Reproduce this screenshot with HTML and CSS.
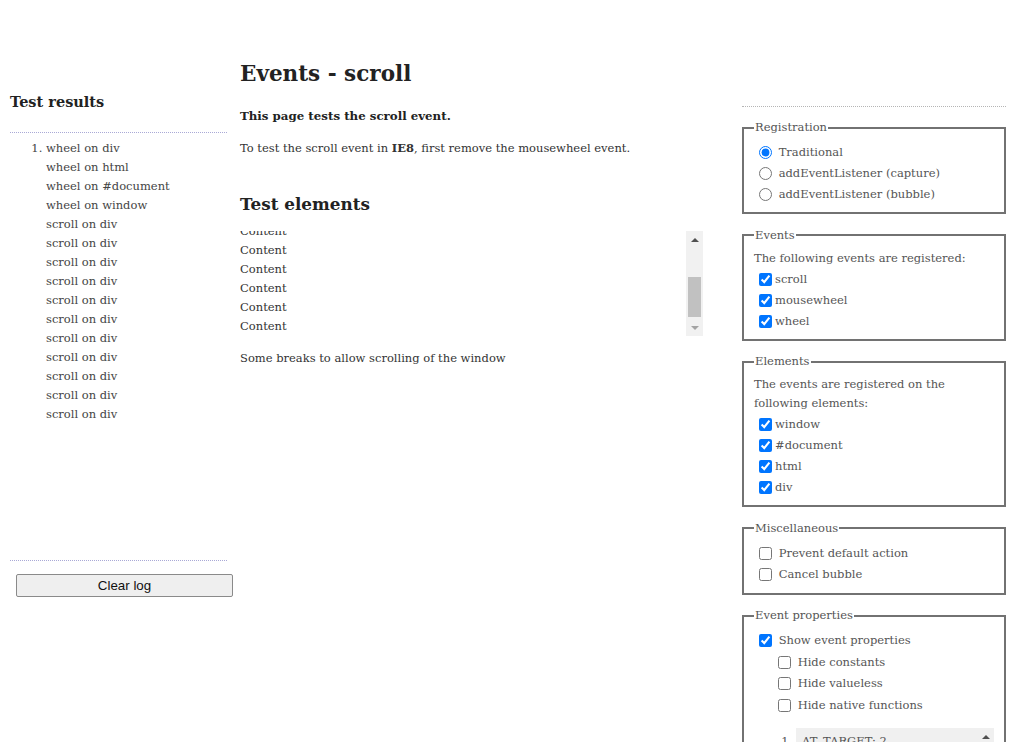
FILE: index.html
```html
<!DOCTYPE html>
<html lang="en">
<head>
    <meta charset="UTF-8">
    <title>Events - scroll</title>
    <link rel="stylesheet" href="styles.css">
</head>
<body>
    <div class="page">
        <div class="sidebar">
            <h3 class="sidebar-title">Test results</h3>
            <div class="log">
                <ol class="log-list">
                    <li>wheel on div<br>wheel on html<br>wheel on #document<br>wheel on window<br>scroll on div<br>scroll on div<br>scroll on div<br>scroll on div<br>scroll on div<br>scroll on div<br>scroll on div<br>scroll on div<br>scroll on div<br>scroll on div<br>scroll on div</li>
                </ol>
            </div>
            <button class="clear-btn">Clear log</button>
        </div>

        <div class="main">
            <h1>Events - scroll</h1>
            <p class="intro">This page tests the scroll event.</p>
            <p>To test the scroll event in <strong>IE8</strong>, first remove the mousewheel event.</p>
            <h2>Test elements</h2>
            <div class="scroll-wrap">
                <div class="scroller">
                    <div>Content</div>
                    <div>Content</div>
                    <div>Content</div>
                    <div>Content</div>
                    <div>Content</div>
                    <div>Content</div>
                    <div>Content</div>
                    <div>Content</div>
                    <div>Content</div>
                    <div>Content</div>
                </div>
                <div class="scrollbar">
                    <span class="sb-btn sb-up"></span>
                    <span class="sb-track"><span class="sb-thumb"></span></span>
                    <span class="sb-btn sb-down"></span>
                </div>
            </div>
            <p class="breaks">Some breaks to allow scrolling of the window</p>
        </div>

        <div class="controls">
            <fieldset>
                <legend>Registration</legend>
                <label class="opt"><input type="radio" name="reg" checked> Traditional</label>
                <label class="opt"><input type="radio" name="reg"> addEventListener (capture)</label>
                <label class="opt"><input type="radio" name="reg"> addEventListener (bubble)</label>
            </fieldset>

            <fieldset>
                <legend>Events</legend>
                <div class="note">The following events are registered:</div>
                <label class="opt"><input type="checkbox" checked>scroll</label>
                <label class="opt"><input type="checkbox" checked>mousewheel</label>
                <label class="opt"><input type="checkbox" checked>wheel</label>
            </fieldset>

            <fieldset>
                <legend>Elements</legend>
                <div class="note">The events are registered on the following elements:</div>
                <label class="opt"><input type="checkbox" checked>window</label>
                <label class="opt"><input type="checkbox" checked>#document</label>
                <label class="opt"><input type="checkbox" checked>html</label>
                <label class="opt"><input type="checkbox" checked>div</label>
            </fieldset>

            <fieldset>
                <legend>Miscellaneous</legend>
                <label class="opt opt-tall"><input type="checkbox"> Prevent default action</label>
                <label class="opt opt-tall"><input type="checkbox"> Cancel bubble</label>
            </fieldset>

            <fieldset>
                <legend>Event properties</legend>
                <label class="opt opt-tall"><input type="checkbox" checked> Show event properties</label>
                <div class="sub">
                    <label class="opt opt-tall"><input type="checkbox"> Hide constants</label>
                    <label class="opt opt-tall"><input type="checkbox"> Hide valueless</label>
                    <label class="opt opt-tall"><input type="checkbox"> Hide native functions</label>
                </div>
                <ol class="props">
                    <li>
                        <div class="prop-box">
                            <div class="prop-list">AT_TARGET: 2<br>BUBBLING_PHASE: 3<br>CAPTURING_PHASE: 1<br>NONE: 0<br>bubbles: false<br>cancelable: false</div>
                            <div class="scrollbar scrollbar-light">
                                <span class="sb-btn sb-up"></span>
                                <span class="sb-track"></span>
                            </div>
                        </div>
                    </li>
                </ol>
            </fieldset>
        </div>
    </div>
</body>
</html>
```

FILE: styles.css
```css
html, body {
    margin: 0;
    padding: 0;
    overflow: hidden;
}

body {
    font-family: "DejaVu Serif", Georgia, serif;
    font-size: 11.5px;
    line-height: 19px;
    color: #333;
    background: #fff;
}

.page {
    display: flex;
    align-items: flex-start;
    padding: 0 10px;
}

/* left column */
.sidebar {
    width: 217px;
    flex-shrink: 0;
    padding-top: 92px;
}

.sidebar-title {
    margin: 0;
    font-size: 14.5px;
    line-height: 19px;
    color: #222;
    padding-bottom: 21px;
    border-bottom: 1px dotted #a9a9d6;
}

.log {
    height: 421px;
    border-bottom: 1px dotted #a9a9d6;
}

.log-list {
    margin: 6px 0 0;
    padding-left: 36px;
    color: #444;
}

.clear-btn {
    display: block;
    width: 217px;
    height: 23px;
    margin: 13px 0 0 6px;
    font-family: "Liberation Sans", Arial, sans-serif;
    font-size: 13.33px;
    color: #111;
    background: #efefef;
    border: 1px solid #8a8a8a;
    border-radius: 2px;
    padding: 0;
}

/* middle column */
.main {
    width: 463px;
    flex-shrink: 0;
    margin-left: 13px;
    padding-top: 60px;
}

.main h1 {
    margin: 0;
    font-size: 21.5px;
    line-height: 28px;
    color: #222;
}

.main p {
    margin: 0;
}

.main .intro {
    margin-top: 19px;
    font-size: 11.8px;
    font-weight: bold;
    color: #222;
}

.main .intro + p {
    margin-top: 13px;
}

.main h2 {
    margin: 35px 0 0;
    font-size: 16.8px;
    line-height: 22px;
    color: #222;
}

.scroll-wrap {
    display: flex;
    height: 105px;
    margin-top: 16px;
}

.scroller {
    flex: 1;
    overflow: hidden;
    display: flex;
    flex-direction: column-reverse;
}

.main .breaks {
    margin-top: 13px;
}

/* classic scrollbar */
.scrollbar {
    width: 17px;
    flex-shrink: 0;
    display: flex;
    flex-direction: column;
    background: #f1f1f1;
}

.scrollbar-light {
    background: #f0f0f0;
}

.sb-btn {
    height: 17px;
    flex-shrink: 0;
    display: flex;
    align-items: center;
    justify-content: center;
}

.sb-btn::before {
    content: '';
    border-left: 4px solid transparent;
    border-right: 4px solid transparent;
}

.sb-up::before {
    border-bottom: 4px solid #505050;
}

.sb-down::before {
    border-top: 4px solid #a3a3a3;
}

.sb-track {
    flex: 1;
    padding-top: 29px;
}

.sb-thumb {
    display: block;
    height: 40px;
    margin: 0 2px;
    background: #c1c1c1;
}

/* right column */
.controls {
    width: 264px;
    flex-shrink: 0;
    margin-left: 39px;
    margin-top: 106px;
    padding-top: 11px;
    border-top: 1px dotted #b5b5b5;
    color: #555;
}

fieldset {
    margin: 0 0 11.5px;
    padding: 5px 10px 7px;
    border: 2px solid #727272;
}

legend {
    padding: 0 1px;
    line-height: 19px;
}

.note {
    margin: -1px 0 1px;
}

.opt {
    display: flex;
    align-items: center;
    height: 21px;
    white-space: pre;
}

.opt input {
    margin: 0 3px 0 5px;
}

.opt-tall {
    height: 21.5px;
}

.sub {
    padding-left: 19px;
}

.props {
    margin: 12px 0 0;
    padding-left: 42px;
}

.prop-box {
    display: flex;
    height: 160px;
    background: #f0f0f0;
}

.prop-list {
    flex: 1;
    padding: 4px 6px;
}
```
